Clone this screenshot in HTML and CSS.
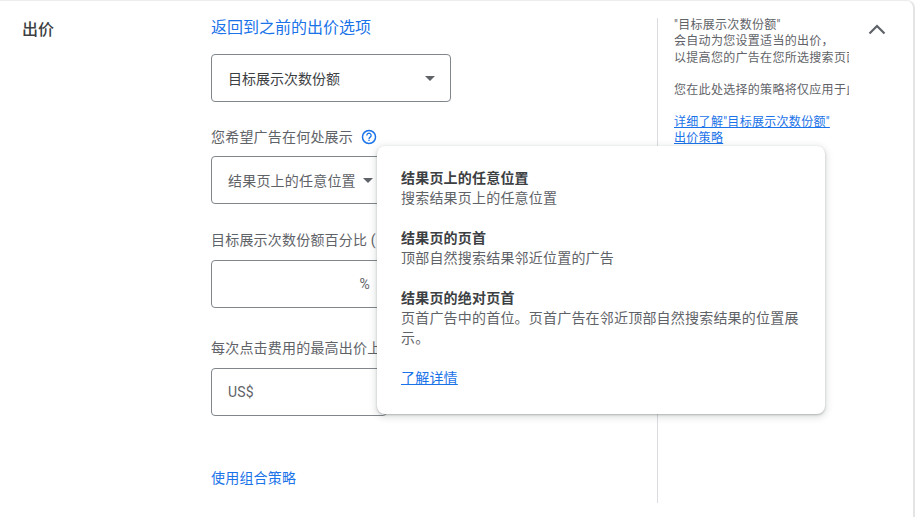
FILE: index.html
```html
<!DOCTYPE html>
<html lang="zh-CN">
<head>
    <meta charset="UTF-8">
    <meta name="viewport" content="width=device-width, initial-scale=1.0">
    <title>出价</title>
    <link rel="stylesheet" href="styles.css">
</head>
<body>
    <div class="card">
        <div class="section-title">出价</div>

        <div class="form-col">
            <a class="back-link" href="#">返回到之前的出价选项</a>

            <div class="select select-wide">
                <span>目标展示次数份额</span>
                <i class="caret"></i>
            </div>

            <div class="field-label label-where">
                您希望广告在何处展示
                <svg class="help" width="16" height="16" viewBox="0 0 24 24">
                    <circle cx="12" cy="12" r="9.8" fill="none" stroke="#1a73e8" stroke-width="2.2"/>
                    <path d="M8.8 9.6a3.2 3.2 0 1 1 5 2.6c-1.1.8-1.8 1.4-1.8 2.8" fill="none" stroke="#1a73e8" stroke-width="2"/>
                    <rect x="11" y="16" width="2" height="2" fill="#1a73e8"/>
                </svg>
            </div>
            <div class="select select-narrow">
                <span>结果页上的任意位置</span>
                <i class="caret"></i>
            </div>

            <div class="field-label label-share">目标展示次数份额百分比 (</div>
            <div class="input input-percent">%</div>

            <div class="field-label label-cpc">每次点击费用的最高出价上</div>
            <div class="input input-money">US$</div>

            <a class="combo-link" href="#">使用组合策略</a>
        </div>

        <div class="side-col">
            <div class="side-text">
                <p>"目标展示次数份额"<br>会自动为您设置适当的出价，<br>以提高您的广告在您所选搜索页面</p>
                <p>您在此处选择的策略将仅应用于此</p>
                <p><a href="#">详细了解"目标展示次数份额"<br>出价策略</a></p>
            </div>
        </div>

        <svg class="collapse" width="24" height="24" viewBox="0 0 24 24">
            <path d="M4.5 15.5 12 8l7.5 7.5" fill="none" stroke="#5f6368" stroke-width="2.2"/>
        </svg>

        <div class="popup">
            <div class="popup-item">
                <b>结果页上的任意位置</b>
                <span>搜索结果页上的任意位置</span>
            </div>
            <div class="popup-item">
                <b>结果页的页首</b>
                <span>顶部自然搜索结果邻近位置的广告</span>
            </div>
            <div class="popup-item">
                <b>结果页的绝对页首</b>
                <span>页首广告中的首位。页首广告在邻近顶部自然搜索结果的位置展示。</span>
            </div>
            <a class="popup-link" href="#">了解详情</a>
        </div>
    </div>
</body>
</html>
```

FILE: styles.css
```css
html, body {
    margin: 0;
    height: 517px;
    overflow: hidden;
    background: #fff;
}

body {
    font-family: Roboto, "Noto Sans CJK SC", sans-serif;
    color: #5f6368;
    letter-spacing: 0.2px;
}

a {
    color: #1a73e8;
}

.card {
    position: relative;
    box-sizing: border-box;
    width: 915px;
    height: 517px;
    display: flex;
    background: #fff;
    border-top: 1px solid #ececec;
    border-right: 2px solid #e4e4e4;
    border-radius: 0 8px 0 0;
}

.section-title {
    width: 211px;
    padding: 18px 0 0 22px;
    box-sizing: border-box;
    font-size: 16px;
    line-height: 22px;
    letter-spacing: 0;
    font-weight: 500;
    color: #3c4043;
}

.form-col {
    width: 446px;
    height: 502px;
    padding-top: 16px;
    box-sizing: border-box;
}

.back-link {
    display: block;
    font-size: 16px;
    line-height: 22px;
    letter-spacing: 0;
    text-decoration: none;
}

.select, .input {
    box-sizing: border-box;
    height: 48px;
    border: 1px solid #80868b;
    border-radius: 4px;
    background: #fff;
    font-size: 14px;
    color: #3c4043;
    display: flex;
    align-items: center;
}

.select {
    padding: 0 16px;
    justify-content: space-between;
}

.select-wide {
    width: 240px;
    margin-top: 15px;
    letter-spacing: 0;
}

.select-narrow {
    width: 176px;
    margin-top: 9px;
    padding-right: 13px;
    color: #5f6368;
}

.caret {
    width: 0;
    height: 0;
    border-left: 5px solid transparent;
    border-right: 5px solid transparent;
    border-top: 5px solid #5f6368;
}

.select-wide .caret {
    margin-right: -1px;
}

.field-label {
    display: flex;
    align-items: center;
    gap: 8px;
    font-size: 14px;
    line-height: 20px;
    white-space: nowrap;
}

.label-where {
    margin-top: 25px;
}

.label-share {
    margin-top: 26px;
}

.label-cpc {
    margin-top: 30px;
}

.input {
    width: 176px;
}

.input-percent {
    margin-top: 10px;
    justify-content: flex-end;
    padding-right: 16px;
    color: #5f6368;
}

.input-money {
    margin-top: 10px;
    padding-left: 16px;
    color: #5f6368;
}

.combo-link {
    display: block;
    margin-top: 52px;
    font-size: 14px;
    line-height: 20px;
    text-decoration: none;
}

.side-col {
    width: 192px;
    height: 485px;
    margin-top: 17px;
    border-left: 1px solid #dadce0;
    overflow: hidden;
}

.side-text {
    width: 175px;
    margin: -1px 0 0 16px;
    overflow: hidden;
    font-size: 12px;
    line-height: 16.25px;
    letter-spacing: 0.3px;
    white-space: nowrap;
}

.side-text p {
    margin: 0 0 16px;
}

.collapse {
    position: absolute;
    top: 17px;
    left: 865px;
}

.popup {
    position: absolute;
    left: 377px;
    top: 145px;
    box-sizing: border-box;
    width: 448px;
    height: 268px;
    padding: 22px 24px;
    background: #fff;
    border-radius: 8px;
    box-shadow: 0 1px 2px rgba(60, 64, 67, 0.3), 0 2px 6px 2px rgba(60, 64, 67, 0.15);
    font-size: 14px;
    line-height: 20px;
}

.popup-item {
    margin-bottom: 20px;
}

.popup-item b {
    display: block;
    font-weight: 700;
    color: #3c4043;
}

.popup-item span {
    display: block;
}

.popup-link {
    display: block;
}
```
